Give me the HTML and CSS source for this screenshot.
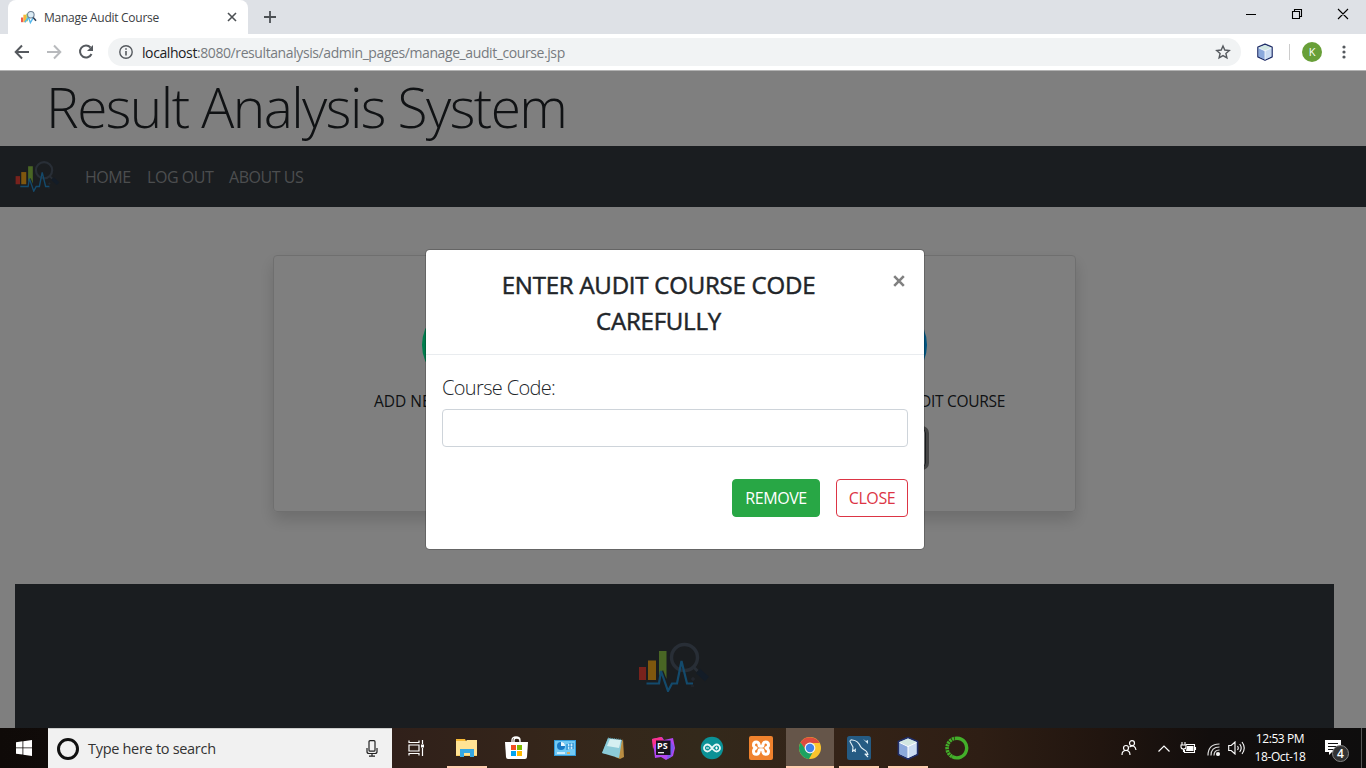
FILE: index.html
```html
<!DOCTYPE html>
<html lang="en">
<head>
<meta charset="utf-8">
<title>Manage Audit Course</title>
<link rel="stylesheet" href="styles.css">
</head>
<body>
<svg class="defs" aria-hidden="true">
  <symbol id="logo" viewBox="0 0 72 52">
    <path fill="#f04438" d="M1 27h7v13H1z"/><path fill="#ffae1c" d="M10 20.500h8v19.500h-8z"/><path fill="#92cc48" d="M21 11h7.500v28l-3.500-9-4 6z"/>
    <circle cx="46.500" cy="17.500" r="13" fill="none" stroke="#505c6c" stroke-width="3.400"/>
    <path fill="none" stroke="#505c6c" stroke-width="3" d="M55.500 27l4 4"/><path fill="none" stroke="#26384e" stroke-width="6" d="M60 31l9 8"/>
    <path fill="none" stroke="#2794d8" stroke-width="2.200" d="M8.500 43.500h12.500L23 31l7 20 4-7.500h5L43.500 21 49 43.500h6"/>
    <path stroke="#4a5567" d="M53 39h4M55 37v4M53 46h3"/>
  </symbol>
  <symbol id="cube" viewBox="0 0 24 24">
    <path fill="#bdd3e8" stroke="#202d68" stroke-width="1.800" stroke-linejoin="round" d="M12 1.500l9.500 4v13L12 23l-9.500-4.500v-13z"/>
    <path fill="#d2e7e2" d="M12 2.500l8.500 3.500L12 10 3.500 6z"/><path fill="#8ba9dc" d="M3.500 6.500l8.500 4V22l-8.500-4z"/><path fill="#cbdcf2" d="M20.500 6.500l-8.500 4V22l8.500-4z"/><path stroke="#fff" d="M12 10v12M3.500 6.500l8.500 4 8.500-4" fill="none"/>
  </symbol>
</svg>
<div class="screen">
  <header class="tabs">
    <div class="tab-before"></div>
    <div class="tab">
      <svg class="favicon" viewBox="0 0 18 16"><path fill="#ef5b50" d="M1 8h2.500v5H1z"/><path fill="#f8b83c" d="M3.500 5h3v8h-3z"/><path fill="#a9d36b" d="M6.500 4h2v8h-2z"/><path stroke="#54b7ec" stroke-width="1.500" fill="none" d="M5 13l4-5 2 5.500 3-5"/><circle cx="11.500" cy="5" r="3.500" fill="#dcecf5" stroke="#6d7f93" stroke-width="1.100"/><path stroke="#2d3c53" stroke-width="1.600" d="M14 8l3 3.500"/></svg>
      <span class="tab-title">Manage Audit Course</span>
      <svg class="tab-close" viewBox="0 0 10 10"><path d="M1 1l8 8M9 1L1 9" stroke="#4c5054" stroke-width="1.600"/></svg>
    </div>
    <div class="newtab"><svg viewBox="0 0 12 12"><path d="M6 0v12M0 6h12" stroke="#4c5054" stroke-width="1.800"/></svg></div>
    <svg class="winctl" viewBox="0 0 108 14" fill="none" stroke="#000" stroke-width="1.100"><path d="M0 7.500h10M48.500 4.500v-2h7v7h-2M46.500 4.500h7v7h-7zM92 2l10 10M102 2L92 12"/></svg>
  </header>
  <div class="toolbar">
    <svg class="arrows" viewBox="0 0 84 18" fill="none" stroke-width="2"><path stroke="#55595e" d="M15 9H2M8 2.500L1.700 9 8 15.500"/><path stroke="#b8babd" d="M33 9h13M40 2.500L46.300 9 40 15.500"/><path stroke="#55595e" d="M76.500 4.500a6 6 0 1 0 1 6.500"/><path fill="#55595e" d="M79 2v6h-6z"/></svg>
    <div class="address">
      <svg class="info" viewBox="0 0 14 14"><circle cx="7" cy="7" r="6.200" fill="none" stroke="#55595e" stroke-width="1.400"/><path stroke="#55595e" stroke-width="1.600" d="M7 6v4.500M7 3.200v1.600"/></svg>
      <span class="url">localhost<i>:8080/resultanalysis/admin_pages/manage_audit_course.jsp</i></span>
      <svg class="star" viewBox="0 0 16 16"><path fill="none" stroke="#55595e" stroke-width="1.400" d="M8 2l1.800 4 4.500.5-3.400 3 1 4.400L8 11.600 4.100 13.900l1-4.400-3.400-3 4.500-.5z"/></svg>
    </div>
    <svg class="ext"><use href="#cube"/></svg>
    <div class="sep"></div>
    <div class="avatar">K</div>
    <svg class="dots" viewBox="0 0 4 14" fill="#55595e"><circle cx="2" cy="2" r="1.600"/><circle cx="2" cy="7" r="1.600"/><circle cx="2" cy="12" r="1.600"/></svg>
  </div>
  <main class="page">
    <h1>Result Analysis System</h1>
    <nav>
      <svg class="nav-logo"><use href="#logo"/></svg>
      <a class="n1">HOME</a><a class="n2">LOG OUT</a><a class="n3">ABOUT US</a>
    </nav>
    <section class="card">
      <div class="choice add"><div class="circle"></div><p>ADD NEW</p></div>
      <div class="choice rem"><div class="circle"></div><p>AUDIT COURSE</p><div class="focus-btn"></div></div>
    </section>
    <footer class="foot"><svg><use href="#logo"/></svg></footer>
    <div class="backdrop">
      <div class="modal">
        <div class="modal-head"><h2><span>ENTER AUDIT COURSE CODE</span><br><span>CAREFULLY</span></h2>
          <svg class="close-x" viewBox="0 0 12 12"><path d="M1.200 1.200l9.600 9.600M10.800 1.200L1.200 10.800" stroke="#808080" stroke-width="2.600"/></svg></div>
        <div class="modal-body">
          <label for="code">Course Code:</label>
          <input id="code" type="text">
          <div class="actions"><button class="remove">REMOVE</button><button class="close">CLOSE</button></div>
        </div>
      </div>
    </div>
  </main>
  <div class="taskbar">
    <div class="start"><svg viewBox="0 0 16 16" fill="#fff"><path d="M0 2.200L6.500 1.300V7.500H0zM7.300 1.200L16 0v7.500H7.300zM0 8.300h6.500v6.300L0 13.700zM7.300 8.300H16V16l-8.700-1.200z"/></svg></div>
    <div class="search"><div class="cortana"></div><span>Type here to search</span>
      <svg viewBox="0 0 12 17" fill="none" stroke="#222" stroke-width="1.200"><rect x="3" y=".7" width="6" height="10.500" rx="1"/><path d="M1 8v3.500q0 2 2 2h6q2 0 2-2V8M6 13.500v2.500M3 16.200h6"/></svg></div>
    <div class="taskview"><svg viewBox="0 0 17 16" fill="none" stroke="#fff" stroke-width="1.200"><path d="M1 .5v2h10v-2M1 15.500v-2h10v2M1 5h10v6H1zM14.500 0v4M14.500 8v8"/><path d="M13 4.500h3v3h-3z" fill="#fff" stroke="none"/></svg></div>
    <div class="apps">
      <div class="app run"><svg viewBox="0 0 24 24"><path fill="#f7b936" d="M1 3h9l1 2H1z"/><path fill="#ffe394" d="M1 5h10l1-1h10v16H1z"/><path fill="#f9cf65" d="M1 19h21v1H1z"/><path fill="#35a8e2" d="M5 13h14v8h-4v-4H9v4H5z"/></svg></div>
      <div class="app"><svg viewBox="0 0 24 24"><path fill="none" stroke="#fff" stroke-width="1.300" d="M8 7V4q0-3 4-3t4 3v3M10 7V4q0-2 3-2t3 3"/><path fill="#fff" d="M1 6h23l-1 15q-.2 2-2 2H4q-1.800 0-2-2z"/><path fill="#f25022" d="M7 9h5v5H7z"/><path fill="#7fba00" d="M13 9h5v5h-5z"/><path fill="#00a4ef" d="M7 15h5v5H7z"/><path fill="#ffb900" d="M13 15h5v5h-5z"/></svg></div>
      <div class="app"><svg viewBox="0 0 24 24"><rect x="1.500" y="4.500" width="21" height="15" fill="#71c9f5" stroke="#319bda"/><circle cx="8" cy="10" r="4" fill="#1979c5"/><path fill="#e9f7ff" d="M8 10V6a4 4 0 0 1 4 4z"/><path stroke="#e9f7ff" stroke-width="1.600" d="M4 17h8M15 9h5M15 12h5"/><path stroke="#1979c5" d="M14 8v6M17 7v6M20 7v6"/><path stroke="#ef9f32" stroke-width="1.500" d="M14 17h3"/></svg></div>
      <div class="app"><svg viewBox="0 0 24 24"><path fill="#b98d42" d="M21 3l1 18-4 2-5-2z"/><path fill="#3e7889" d="M0 17L6 2l3 1-6 15z"/><path fill="#8ccbd8" d="M6 2l14 2-3 18L0 17z"/><path fill="#d6f0f2" d="M8 3l11 1-2 8L5 10z"/><path stroke="#568f9b" d="M6 2l14 1.500" stroke-dasharray="1 1"/></svg></div>
      <div class="app"><svg viewBox="0 0 24 24"><path fill="#b345f2" d="M1 3l10-2 2 3 9-2 2 10-2 8-7 4-5-3-6 1-1-8z"/><path fill="#fc318c" d="M1 3l9-2 3 4-9 3-2 5z"/><path fill="#7659ef" d="M19 4l4 7-3 10-4 2z"/><path fill="#17121c" d="M5 4.500h14.500V19H5z"/><text x="6" y="12.500" class="ps">PS</text><path stroke="#fff" stroke-width="1.200" d="M7 16.700h6"/></svg></div>
      <div class="app"><svg viewBox="0 0 24 24"><circle cx="12" cy="12" r="11.200" fill="#0b9196"/><path fill="none" stroke="#e8f6f6" stroke-width="1.800" d="M12 12C9.500 8.500 8.500 8.500 7.500 8.500a3.500 3.500 0 0 0 0 7c1.500 0 2.500-1 4.500-3.500s3-3.500 4.500-3.500a3.500 3.500 0 0 1 0 7c-1.500 0-2.500-1-4.500-3.500z"/><path stroke="#fff" d="M6 12h3M15 12h3M16.500 10.500v3"/></svg></div>
      <div class="app"><svg viewBox="0 0 24 24"><rect width="24" height="24" rx="2" fill="#f0822d"/><path fill="none" stroke="#fff" stroke-width="3" stroke-linejoin="round" d="M10 8.500Q9.500 6 7.300 6 4.500 6 4.500 9q0 2 2.500 3-2.500 1-2.500 3.500 0 2.700 2.800 2.700 2.700 0 2.700-3.200M14 8.500Q14.500 6 16.700 6q2.800 0 2.800 3 0 2-2.500 3 2.500 1 2.500 3.500 0 2.700-2.800 2.700-2.700 0-2.700-3.200M10 7.500v2q0 .8 1 .8h2q1 0 1-.8v-2M10 16.500v-2q0-.8 1-.8h2q1 0 1 .8v2"/></svg></div>
      <div class="app active"><svg viewBox="0 0 24 24"><circle cx="12" cy="12" r="11" fill="#fbc52e"/><path fill="#dd4b3e" d="M2.500 6.500A11 11 0 0 1 21.600 7H12a5 5 0 0 0-4.500 7z"/><path fill="#1ca261" d="M2.500 6.500A11 11 0 0 0 11 23l5-9H8z"/><circle cx="12" cy="12" r="5.400" fill="#f4f4f4"/><circle cx="12" cy="12" r="4.200" fill="#3f82e9"/></svg></div>
      <div class="app run"><svg viewBox="0 0 24 24"><rect width="24" height="24" rx="2.500" fill="#255b83"/><path fill="none" stroke="#e4f0f5" stroke-width="1.100" stroke-linejoin="round" d="M8.500 16L7 14l-1.500 1.500L6 11 3 5.500Q3 3.500 5.500 4C10 4.500 12 7 13.500 10.500c1 2.500 4.500 3 6 5l1.500 3-3-.5 3 3M8.500 16q-1-3 .5-3"/><path fill="#d7e8f1" d="M16 3l5 5V4l-2 1z"/></svg></div>
      <div class="app run"><svg><use href="#cube"/></svg></div>
      <div class="app"><svg viewBox="0 0 24 24" fill="none" stroke="#43b02a"><path stroke-width="3.400" d="M12 2.200a9.800 9.800 0 1 1-5 18.300"/><path stroke-width="3.600" stroke-dasharray="2.200 .7" d="M12 2.200a9.800 9.800 0 0 0-5 18.300"/></svg></div>
    </div>
    <div class="tray">
      <svg class="people" viewBox="0 0 16 16" fill="none" stroke="#fff" stroke-width="1.200"><circle cx="5" cy="8" r="2.500"/><path d="M1 15q0-4.500 4-4.500T9 15"/><circle cx="11" cy="3.200" r="2.500"/><path d="M8.500 7q5.500-3 6.500 3"/></svg>
      <svg class="chev" viewBox="0 0 12 7"><path d="M.5 6.500L6 1l5.500 5.500" fill="none" stroke="#fff" stroke-width="1.200"/></svg>
      <svg class="battery" viewBox="0 0 17 12" fill="none" stroke="#fff" stroke-width="1.100"><path d="M6 2.500h8.500v8H4.500V8M15.500 5v3M1 3h5v2q0 2-2.500 2T1 5zM2 0v3M5 0v3M3.500 7v3"/><path fill="#fff" stroke="none" d="M7 4h6.500v5H6z"/></svg>
      <svg class="wifi" viewBox="0 0 13 13" fill="none" stroke="#ddd" stroke-width="1.200"><path d="M1 12.500Q1 1 12.500 1M4 12.500Q4 4 12.500 4M7 12.500Q7 7 12.500 7"/><circle cx="11" cy="11" r="1.500" fill="#fff"/></svg>
      <svg class="sound" viewBox="0 0 17 14" fill="none" stroke="#fff" stroke-width="1.100"><path d="M.7 4.500h2.500L7 1v12L3.200 9.500H.7zM9.500 5q1.500 2 0 4M11.700 3q3 4 0 8M14 1q4.500 6 0 12"/></svg>
      <div class="clock"><span>12:53 PM</span><span>18-Oct-18</span></div>
      <div class="notif"><svg viewBox="0 0 16 16"><path fill="#fff" d="M0 0h16v12H7l-3 3v-3H0z"/><path stroke="#111" d="M3 3.500h10M3 6.500h10M3 9.500h6"/></svg><b>4</b></div>
      <div class="peek"></div>
    </div>
  </div>
</div>
</body>
</html>
```
FILE: styles.css
```css
* { box-sizing: border-box; }
body { margin: 0; overflow: hidden; font-family: "Open Sans", "Noto Sans", sans-serif; color: #212529; }
svg { display: block; flex: none; }
span, a, p, h1, label { white-space: nowrap; }
.defs { display: none; }
.screen { width: 1366px; height: 768px; display: flex; flex-direction: column; overflow: hidden; }

.tabs { height: 34px; background: #dee1e6; display: flex; flex: none; }
.tab-before { width: 8px; background: #dee1e6; }
.tab { width: 240px; background: #fff; border-radius: 8px 8px 0 0; display: flex; align-items: center; padding: 0 11px 0 12px; }
.favicon { width: 17px; height: 15px; }
.tab-title { font-size: 12px; margin-left: 7px; letter-spacing: -.27px; flex: 1; color: #3c4043; }
.tab-close { width: 10px; height: 10px; }
.newtab { width: 44px; display: flex; align-items: center; justify-content: center; }
.newtab svg { width: 12px; height: 12px; }
.winctl { width: 108px; height: 14px; margin: 7px 12px 0 auto; }

.toolbar { height: 36px; flex: none; background: #fff; display: flex; align-items: center; padding-left: 14px; }
.arrows { width: 84px; height: 18px; }
.address { margin-left: 10px; width: 1133px; height: 28px; border-radius: 14px; background: #f1f3f4; display: flex; align-items: center; padding: 0 10px 0 11px; }
.info { width: 14px; height: 14px; }
.url { margin-left: 9px; font-size: 14px; letter-spacing: -.41px; flex: 1; color: #202124; }
.url i { font-style: normal; color: #777b80; }
.star { width: 16px; height: 16px; }
.ext { width: 18px; height: 18px; margin-left: 15px; }
.sep { width: 1px; height: 16px; background: #ccc; margin-left: 15px; }
.avatar { width: 20px; height: 20px; border-radius: 50%; background: #689f38; color: #fff; font-size: 11px; line-height: 20px; text-align: center; margin-left: 12px; }
.dots { width: 4px; height: 14px; margin-left: 20px; }

.page { height: 658px; flex: none; position: relative; background: #fff; overflow: hidden; display: flex; flex-direction: column; }
h1 { margin: 0; height: 76px; flex: none; padding: 0 0 0 46px; font-size: 55px; font-weight: 300; line-height: 74px; letter-spacing: -1.55px; }
nav { height: 61px; flex: none; background: #343a40; display: flex; align-items: center; padding-left: 15px; }
.nav-logo { width: 45px; height: 33px; margin-top: -2px; }
nav a { font-size: 16px; letter-spacing: -.45px; color: #999c9f; }
.n1 { margin-left: 25px; width: 62px; }
.n2 { width: 82px; }
.card { width: 803px; height: 257px; flex: none; margin: 48px 0 0 273px; border: 1px solid #dfdfdf; border-radius: 4px; box-shadow: 0 8px 16px rgba(0,0,0,.15); display: flex; justify-content: space-between; padding: 48px 70px 0 100px; }
.choice { display: flex; flex-direction: column; }
.circle { width: 82px; height: 82px; border-radius: 50%; }
.add .circle { background: #00fa9a; margin-left: 48px; }
.rem .circle { background: #00a8ff; align-self: flex-end; margin-right: 78px; }
.choice p { margin: 3px 0 0; font-size: 15.500px; line-height: 24px; letter-spacing: -.3px; }
.add p { letter-spacing: 0; }
.rem { align-items: flex-end; }
.focus-btn { width: 90px; height: 38px; margin: 16px 79px 0 0; border: 1px solid #343a40; background: #fff; border-radius: 4px; box-shadow: 0 0 0 3px #888; }
.foot { width: 1319px; height: 144px; flex: none; margin: 72px 0 0 15px; background: #343a40; padding: 56px 0 0 623px; }
.foot svg { width: 72px; height: 52px; }
.backdrop { position: absolute; inset: 0; background: rgba(0,0,0,.5); border-top: 1px solid rgba(255,255,255,.4); padding: 178px 0 0 425px; }
.modal { width: 500px; height: 301px; border: 1px solid rgba(0,0,0,.2); background: #fff; background-clip: padding-box; border-radius: 4.800px; }
.modal-head { height: 105px; border-bottom: 1px solid #e9ecef; display: flex; padding: 17px 19px 0 16px; }
h2 { margin: 0; flex: 1; padding-right: 18px; text-align: center; font-size: 24px; line-height: 36px; font-weight: 500; letter-spacing: -.22px; -webkit-text-stroke: .5px #212529; }
.close-x { width: 12px; height: 12px; margin-top: 8px; }
.modal-body { padding: 16px; display: flex; flex-direction: column; }
label { font-size: 20px; font-weight: 300; line-height: 30px; margin-bottom: 6px; padding-top: 2px; letter-spacing: -.65px; }
input { height: 38px; border: 1px solid #ced4da; border-radius: 4px; padding: 6px 12px; }
.actions { display: flex; justify-content: flex-end; gap: 16px; margin-top: 32px; }
button { height: 38px; border-radius: 4px; padding: 0; font: 16px/24px "Open Sans", sans-serif; letter-spacing: -.4px; white-space: nowrap; }
.remove { width: 88px; border: 1px solid #28a745; background: #28a745; color: #fff; }
.close { width: 72px; border: 1px solid #dc3545; background: #fff; color: #dc3545; }

.taskbar { height: 40px; flex: none; display: flex; color: #fff; background: linear-gradient(90deg, #0f0a08 0, #100b09 48px, #30201a 392px, #35261a 560px, #33291b 700px, #342317 840px, #2e1e14 980px, #21150f 1100px, #120e0d 1210px, #0e0d0d 1366px); }
.start { width: 48px; display: flex; align-items: center; justify-content: center; }
.start svg { width: 16px; height: 16px; }
.search { width: 344px; background: #f1f1f1; border-top: 1px solid #ccc; color: #333; display: flex; align-items: center; padding: 0 14px 0 9px; }
.cortana { width: 22px; height: 22px; border: 3px solid #111; border-radius: 50%; }
.search span { font-size: 14.500px; margin-left: 9px; letter-spacing: -.3px; flex: 1; }
.search svg { width: 12px; height: 17px; }
.taskview { width: 50px; display: flex; align-items: center; padding-left: 16px; }
.taskview svg { width: 17px; height: 16px; }
.apps { display: flex; }
.app { width: 49px; display: flex; align-items: center; justify-content: center; border-bottom: 2px solid transparent; padding-top: 2px; }
.app svg { width: 24px; height: 24px; }
.run { background: linear-gradient(#ffceb0, #ffceb0) 5px 100% / 40px 2px no-repeat; background-origin: border-box; background-clip: border-box; }
.active { background: #655549; border-bottom-color: #ffceb0; width: 48px; margin: 0 0 0 1px; }
.ps { font: 700 9px "Open Sans", sans-serif; fill: #fff; }
.tray { margin-left: auto; display: flex; align-items: center; }
.people { width: 16px; height: 16px; }
.chev { width: 12px; height: 7px; margin-left: 21px; }
.battery { width: 17px; height: 12px; margin-left: 10px; }
.wifi { width: 13px; height: 13px; margin: 3px 0 0 10px; }
.sound { width: 17px; height: 14px; margin-left: 8px; }
.clock { width: 56px; margin-left: 7px; margin-right: 1px; display: flex; flex-direction: column; align-items: center; font-size: 12px; line-height: 18px; }
.clock span { letter-spacing: -.4px; }
.notif { position: relative; margin-left: 16px; width: 25px; height: 24px; padding-top: 4px; }
.notif svg { width: 16px; height: 16px; }
.notif b { position: absolute; left: 7px; top: 9px; width: 17px; height: 17px; border-radius: 50%; border: 1px solid #858585; background: #333; font-size: 12px; font-weight: 600; line-height: 15px; text-align: center; }
.peek { width: 1px; height: 40px; background: #555; margin: 0 4px 0 11px; }
```
